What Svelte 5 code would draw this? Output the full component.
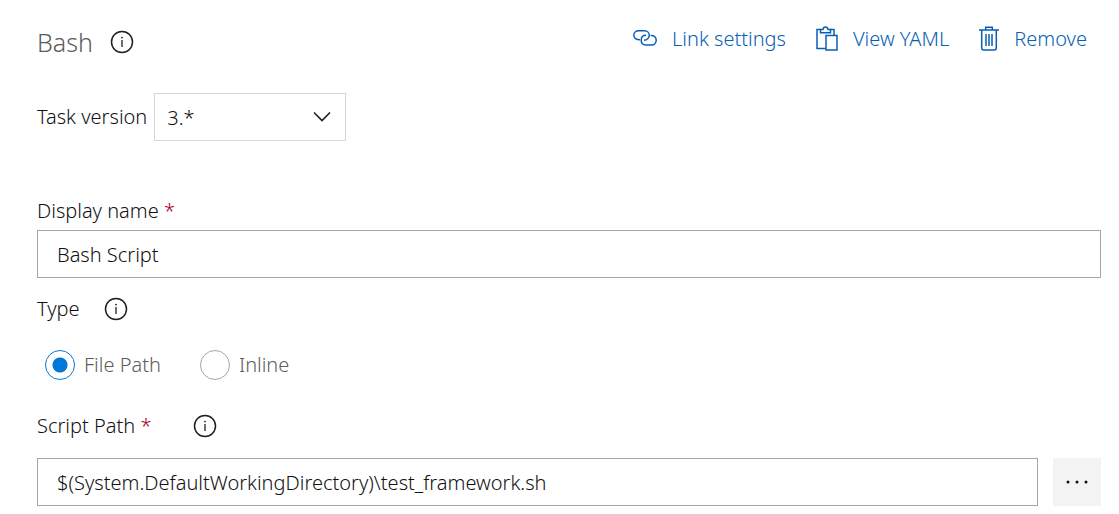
<script>
  let version = $state('3.*');
  let displayName = $state('Bash Script');
  let type = $state('file');
  let scriptPath = $state('$(System.DefaultWorkingDirectory)\\test_framework.sh');
</script>

{#snippet info(label)}
  <button class="info" type="button" aria-label={label}>
    <svg width="24" height="24" viewBox="0 0 24 24" fill="none" aria-hidden="true">
      <circle cx="12" cy="12" r="10.5" stroke="#1f1f1f" stroke-width="1.5" />
      <path d="M12 10v7" stroke="#1f1f1f" stroke-width="1.3" />
      <circle cx="12" cy="7.6" r="0.9" fill="#1f1f1f" />
    </svg>
  </button>
{/snippet}

<main>
  <header>
    <div class="title">
      <h1>Bash</h1>
      {@render info('About this task')}
    </div>
    <nav>
      <a href="#link-settings">
        <svg width="24" height="26" viewBox="1 0 24 26" fill="none" stroke="currentColor" stroke-width="1.5" aria-hidden="true">
          <path d="M8 13.8C3.6 13.8 1.8 11.7 1.8 9.3C1.8 6.6 4 4.8 6.4 4.8H12.5C15.5 4.8 17.3 7 17.3 9.3C17.3 12 15 14.3 12 14.3" />
          <path d="M18.6 9.4C22.3 9.4 24.2 11.6 24.2 14.3C24.2 17 22.2 19 19.5 19H14C11 19 9.2 17 9.2 14.3C9.2 11.5 11 9.3 14 9.3" />
        </svg>
        <span>Link settings</span>
      </a>
      <a href="#view-yaml">
        <svg width="22" height="26" viewBox="1 0 22 26" fill="none" stroke="currentColor" stroke-width="1.5" aria-hidden="true">
          <path d="M10.5 22.5H2V3.5H5.5M15.5 3.5H19V9" />
          <path d="M5.5 6.8V3.5H8C8.2 1.9 9.2 1 10.5 1S12.8 1.9 13 3.5H15.5V6.8Z" />
          <path d="M11 9.5H22V24H11Z" />
        </svg>
        <span>View YAML</span>
      </a>
      <a href="#remove">
        <svg width="20" height="26" viewBox="1 0 20 26" fill="none" stroke="currentColor" stroke-width="1.5" aria-hidden="true">
          <path d="M1 4H21M7.7 4V1.3H14.3V4M3.7 4V22Q3.7 24 5.7 24H16.3Q18.3 24 18.3 22V4M8 8V20M11 8V20M14 8V20" />
        </svg>
        <span>Remove</span>
      </a>
    </nav>
  </header>

  <div class="version">
    <label for="version">Task version</label>
    <div class="select">
      <select id="version" bind:value={version}>
        <option>3.*</option>
        <option>2.*</option>
      </select>
      <svg width="18" height="12" viewBox="0 0 18 12" fill="none" stroke="#1f1f1f" stroke-width="1.6" aria-hidden="true">
        <path d="M1 1.5L9 9.5L17 1.5" />
      </svg>
    </div>
  </div>

  <div class="label-row">
    <label for="name">Display name <span class="required">*</span></label>
  </div>
  <input id="name" class="text" type="text" bind:value={displayName} />

  <div class="label-row type-row">
    <span id="type-label">Type</span>
    {@render info('About type')}
  </div>
  <div class="radios" role="radiogroup" aria-labelledby="type-label">
    <label><input type="radio" name="type" value="file" bind:group={type} />File Path</label>
    <label><input type="radio" name="type" value="inline" bind:group={type} />Inline</label>
  </div>

  <div class="label-row path-row">
    <label for="path">Script Path <span class="required">*</span></label>
    {@render info('About script path')}
  </div>
  <div class="path">
    <input id="path" class="text" type="text" bind:value={scriptPath} />
    <button class="browse" type="button" aria-label="Browse">
      <svg width="24" height="4" viewBox="0 0 24 4" fill="#111" aria-hidden="true">
        <circle cx="3" cy="2" r="1.5" />
        <circle cx="12" cy="2" r="1.5" />
        <circle cx="21" cy="2" r="1.5" />
      </svg>
    </button>
  </div>
</main>

<style>
  :global(body) {
    margin: 0;
    background: #fff;
  }

  main {
    padding: 24px 18px 8px 37px;
    color: #111;
    font-family: 'Segoe UI', 'Noto Sans', sans-serif;
    font-size: 20px;
    font-weight: 300;
    line-height: 30px;
  }

  header {
    display: flex;
    justify-content: space-between;
    align-items: flex-start;
  }

  .title {
    display: flex;
    align-items: center;
    gap: 17px;
  }

  h1 {
    margin: 0;
    color: #5c5c5c;
    font-size: 25px;
    font-weight: 300;
    line-height: 36px;
  }

  .info {
    display: flex;
    padding: 0;
    border: 0;
    background: none;
  }

  nav {
    display: flex;
    gap: 30px;
    padding-right: 14px;
  }

  a {
    display: flex;
    align-items: center;
    gap: 15px;
    color: #0860b4;
    text-decoration: none;
  }

  .version {
    display: flex;
    align-items: center;
    gap: 7px;
    margin-top: 33px;
  }

  .select {
    display: grid;
    align-items: center;
    width: 192px;
  }

  .select > * {
    grid-area: 1 / 1;
  }

  .select svg {
    justify-self: end;
    margin-right: 15px;
    pointer-events: none;
  }

  select {
    appearance: none;
    box-sizing: border-box;
    width: 100%;
    height: 48px;
    padding: 2px 12px 0;
    border: 1px solid #d6d6d6;
    border-radius: 0;
    background: #fff;
    color: inherit;
    font: inherit;
  }

  .label-row {
    display: flex;
    align-items: center;
    gap: 24px;
    margin-top: 55px;
    padding-bottom: 4px;
  }

  .required {
    color: #a80024;
  }

  .text {
    display: block;
    box-sizing: border-box;
    width: 100%;
    min-width: 0;
    height: 48px;
    padding: 0 19px;
    border: 1px solid #a6a6a6;
    border-radius: 0;
    background: #fff;
    color: inherit;
    font: inherit;
  }

  .type-row {
    margin-top: 16px;
    padding-bottom: 26px;
  }

  .radios {
    display: flex;
    gap: 39px;
    padding-left: 8px;
    color: #5c5c5c;
  }

  .radios label {
    display: flex;
    align-items: center;
    gap: 9px;
  }

  .radios input {
    appearance: none;
    box-sizing: border-box;
    width: 30px;
    height: 30px;
    margin: 0;
    border: 1px solid #a6a6a6;
    border-radius: 50%;
  }

  .radios input:checked {
    border-color: #0078d7;
    background: radial-gradient(circle, #0078d7 7px, transparent 8px);
  }

  .path-row {
    gap: 42px;
    margin-top: 31px;
    padding-bottom: 17px;
  }

  .path {
    display: flex;
    gap: 15px;
  }

  .browse {
    display: flex;
    flex: none;
    align-items: center;
    justify-content: center;
    width: 48px;
    height: 48px;
    padding: 0;
    border: 0;
    background: #f3f3f3;
  }
</style>
